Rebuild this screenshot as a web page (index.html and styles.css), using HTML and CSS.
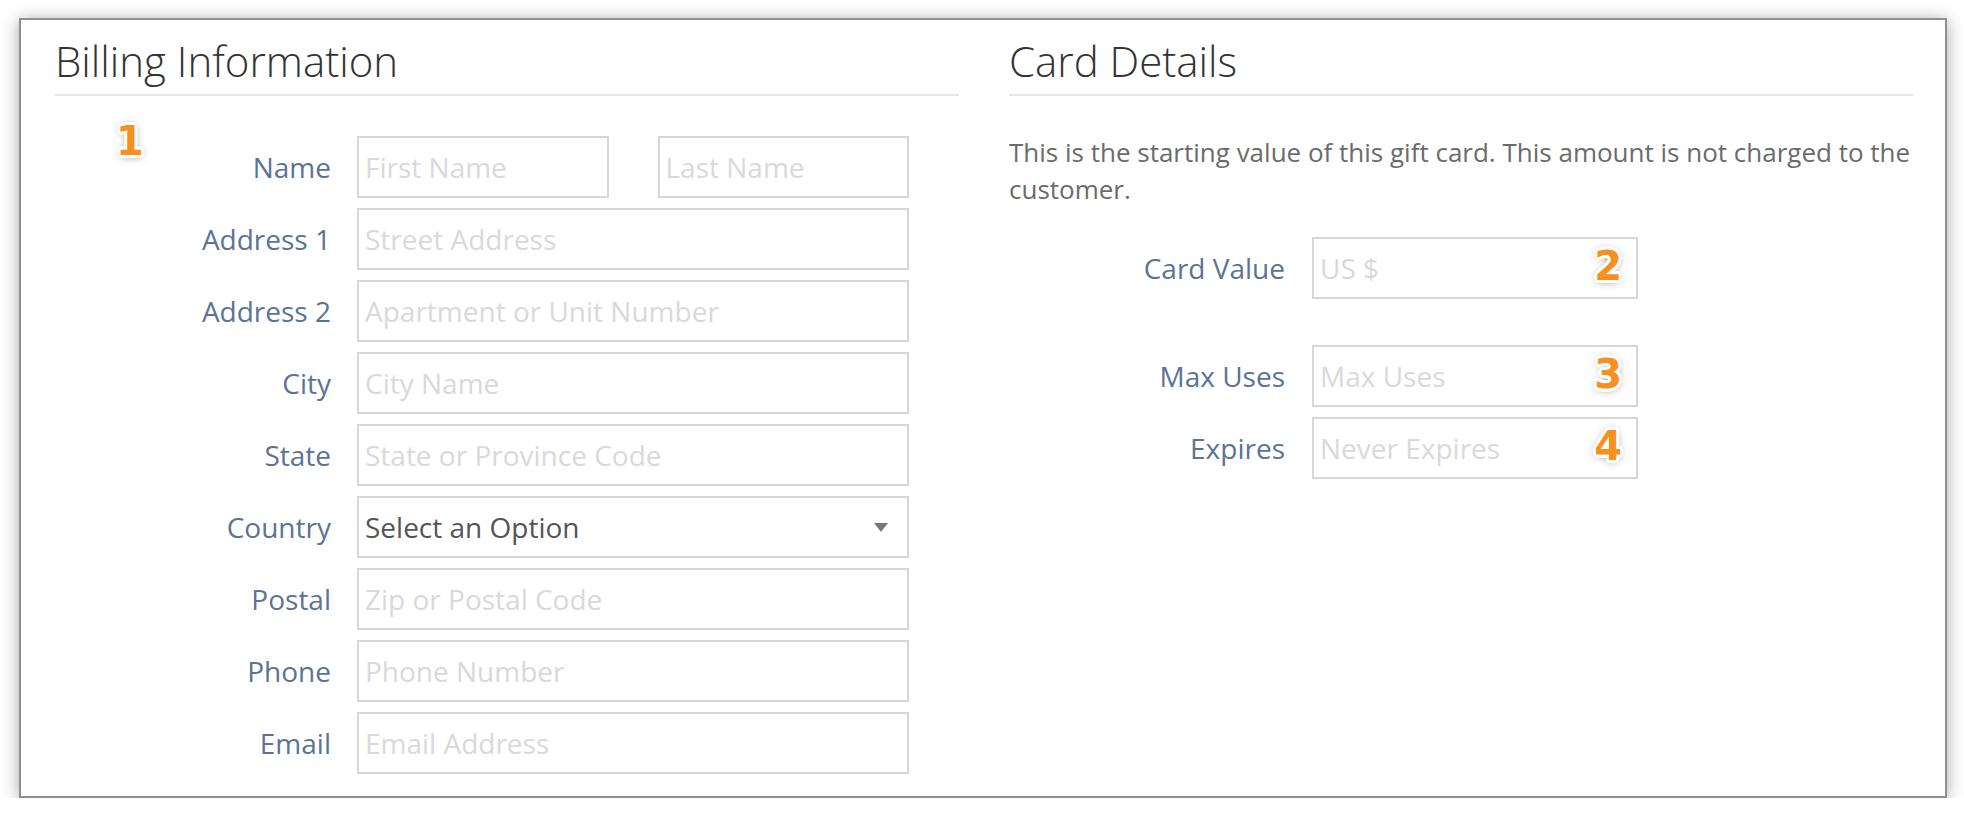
FILE: index.html
```html
<!DOCTYPE html>
<html lang="en">
<head>
    <meta charset="UTF-8">
    <meta name="viewport" content="width=device-width, initial-scale=1.0">
    <title>Gift Card - Billing</title>
    <link rel="stylesheet" href="styles.css">
</head>
<body>
    <div class="panel">
        <!-- Billing column -->
        <section class="col billing">
            <h2>Billing Information</h2>
            <span class="marker marker-1">1</span>

            <div class="fields">
                <div class="field">
                    <label>Name</label>
                    <div class="pair">
                        <input type="text" placeholder="First Name">
                        <input type="text" placeholder="Last Name">
                    </div>
                </div>
                <div class="field">
                    <label>Address 1</label>
                    <input type="text" placeholder="Street Address">
                </div>
                <div class="field">
                    <label>Address 2</label>
                    <input type="text" placeholder="Apartment or Unit Number">
                </div>
                <div class="field">
                    <label>City</label>
                    <input type="text" placeholder="City Name">
                </div>
                <div class="field">
                    <label>State</label>
                    <input type="text" placeholder="State or Province Code">
                </div>
                <div class="field">
                    <label>Country</label>
                    <div class="select-wrap">
                        <select>
                            <option>Select an Option</option>
                        </select>
                    </div>
                </div>
                <div class="field">
                    <label>Postal</label>
                    <input type="text" placeholder="Zip or Postal Code">
                </div>
                <div class="field">
                    <label>Phone</label>
                    <input type="text" placeholder="Phone Number">
                </div>
                <div class="field">
                    <label>Email</label>
                    <input type="text" placeholder="Email Address">
                </div>
            </div>
        </section>

        <!-- Card column -->
        <section class="col card">
            <h2>Card Details</h2>
            <p class="note">This is the starting value of this gift card. This amount is not charged to the customer.</p>

            <div class="fields card-fields">
                <div class="field value-field">
                    <label>Card Value</label>
                    <div class="input-wrap">
                        <input type="text" placeholder="US $">
                        <span class="marker">2</span>
                    </div>
                </div>
                <div class="field">
                    <label>Max Uses</label>
                    <div class="input-wrap">
                        <input type="text" placeholder="Max Uses">
                        <span class="marker">3</span>
                    </div>
                </div>
                <div class="field">
                    <label>Expires</label>
                    <div class="input-wrap">
                        <input type="text" placeholder="Never Expires">
                        <span class="marker">4</span>
                    </div>
                </div>
            </div>
        </section>
    </div>
</body>
</html>
```

FILE: styles.css
```css
* {
    margin: 0;
    padding: 0;
    box-sizing: border-box;
}

body {
    background: #ffffff;
    font-family: 'Open Sans', 'Noto Sans', sans-serif;
    color: #333333;
}

.panel {
    width: 1928px;
    height: 780px;
    margin: 18px 0 0 19px;
    padding: 12px 32px 0 34px;
    background: #ffffff;
    border: 2px solid #8f8f8f;
    box-shadow: 0 2px 16px rgba(0, 0, 0, 0.35);
    display: grid;
    grid-template-columns: 1fr 1fr;
    column-gap: 50px;
    align-items: start;
}

.col {
    position: relative;
}

h2 {
    font-size: 42px;
    font-weight: 300;
    line-height: 57px;
    color: #333333;
    padding-bottom: 5px;
    border-bottom: 2px solid #e6e6e6;
}

/* Form rows */
.fields {
    margin-top: 40px;
    display: flex;
    flex-direction: column;
    gap: 10px;
}

.field {
    display: grid;
    grid-template-columns: 276px 552px;
    column-gap: 26px;
    align-items: center;
}

.field label {
    text-align: right;
    font-size: 28px;
    color: #5b7394;
}

input,
select {
    width: 100%;
    height: 62px;
    padding: 0 6px;
    border: 2px solid #d7d7d7;
    border-radius: 0;
    background: #ffffff;
    font-family: 'Open Sans', 'Noto Sans', sans-serif;
    font-size: 28px;
    color: #555555;
    outline: none;
}

input::placeholder {
    color: #d9d9d9;
}

.pair {
    display: grid;
    grid-template-columns: 1fr 1fr;
    column-gap: 49px;
}

.select-wrap {
    position: relative;
}

select {
    appearance: none;
    -webkit-appearance: none;
}

.select-wrap::after {
    content: '';
    position: absolute;
    right: 21px;
    top: 27px;
    border-left: 7.5px solid transparent;
    border-right: 7.5px solid transparent;
    border-top: 9px solid #777777;
    pointer-events: none;
}

/* Card details */
.note {
    margin-top: 38px;
    font-size: 26px;
    line-height: 37px;
    color: #6b6b6b;
}

.card-fields {
    margin-top: 29px;
}

.card-fields .field {
    grid-template-columns: 276px 326px;
    column-gap: 27px;
}

.value-field {
    margin-bottom: 36px;
}

.input-wrap {
    position: relative;
}

/* Numbered callouts */
.marker {
    position: absolute;
    right: 16px;
    top: 9px;
    font-family: 'DejaVu Sans', 'Liberation Sans', sans-serif;
    font-size: 40px;
    font-weight: 700;
    line-height: 40px;
    color: #f7901e;
    text-shadow:
        3px 0 #fff, -3px 0 #fff, 0 3px #fff, 0 -3px #fff,
        2px 2px #fff, -2px -2px #fff, 2px -2px #fff, -2px 2px #fff,
        1px 3px #fff, -1px 3px #fff, 1px -3px #fff, -1px -3px #fff,
        0 1px 8px rgba(0, 0, 0, 0.55);
    pointer-events: none;
}

.marker-1 {
    left: 61px;
    right: auto;
    top: 89px;
}
```
